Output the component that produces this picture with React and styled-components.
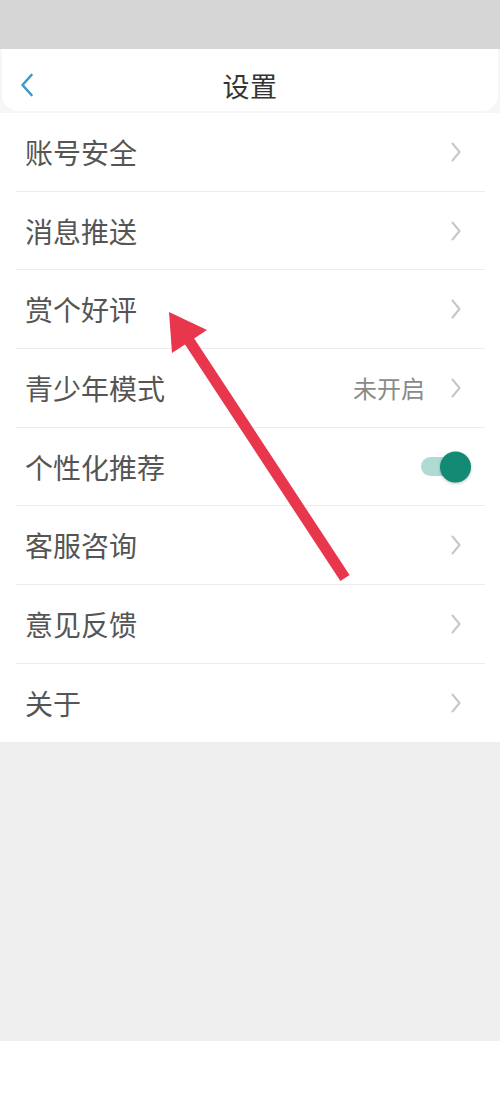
import React from "react";
import styled, { createGlobalStyle } from "styled-components";

const Global = createGlobalStyle`
  html, body { margin: 0; padding: 0; background: #ffffff; }
  body { font-family: "Noto Sans CJK SC", "Noto Sans", sans-serif; }
`;

const Page = styled.div`
  position: relative;
  width: 500px;
  height: 1111px;
  background: #ffffff;
  display: flex;
  flex-direction: column;
  overflow: hidden;
`;

const StatusBar = styled.div`
  height: 49px;
  background: #d6d6d6;
  flex-shrink: 0;
`;

const HeaderWrap = styled.div`
  background: #f6f6f6;
  padding: 0 2px 2px 2px;
  flex-shrink: 0;
`;

const Header = styled.div`
  height: 62px;
  box-sizing: border-box;
  padding-top: 10px;
  background: #ffffff;
  border-radius: 0 0 16px 16px;
  display: flex;
  align-items: center;
  justify-content: center;
  position: relative;
`;

const BackButton = styled.div`
  position: absolute;
  left: 18px;
  top: 74px;
  top: 50%;
  transform: translateY(calc(-50% + 5px));
  width: 18px;
  height: 26px;
  display: flex;
  align-items: center;
`;

const Title = styled.div`
  font-size: 27px;
  color: #333333;
  letter-spacing: 0.5px;
`;

const List = styled.div`
  background: #ffffff;
  flex-shrink: 0;
`;

const Row = styled.div`
  height: 77.7px;
  margin: 0 15px 0 16px;
  padding: 0 24px 0 9px;
  display: flex;
  align-items: center;
  border-bottom: ${(p) => (p.$last ? "none" : "1px solid #ededed")};
`;

const Label = styled.div`
  flex: 1;
  font-size: 28px;
  color: #555555;
`;

const Value = styled.div`
  font-size: 24px;
  color: #8a8a8a;
  margin-right: 26px;
`;

const Track = styled.div`
  position: relative;
  width: 38px;
  height: 19px;
  border-radius: 10px;
  background: #b0dbd5;
  margin-right: 2px;
`;

const Knob = styled.div`
  position: absolute;
  right: -12px;
  top: 50%;
  transform: translateY(-50%);
  width: 31px;
  height: 31px;
  border-radius: 50%;
  background: #128a74;
  box-shadow: 0 1px 3px rgba(0, 0, 0, 0.25);
`;

const Filler = styled.div`
  height: 299px;
  background: #efefef;
  flex-shrink: 0;
`;

const ArrowLayer = styled.svg`
  position: absolute;
  left: 0;
  top: 0;
  pointer-events: none;
`;

const Chevron = () => (
  <svg width="10" height="20" viewBox="0 0 10 20">
    <path d="M1.5 1.5 L8.5 10 L1.5 18.5" fill="none" stroke="#c6c6c6" strokeWidth="2" strokeLinecap="round" strokeLinejoin="round" />
  </svg>
);

const items = [
  { label: "账号安全" },
  { label: "消息推送" },
  { label: "赏个好评" },
  { label: "青少年模式", value: "未开启" },
  { label: "个性化推荐", toggle: true },
  { label: "客服咨询" },
  { label: "意见反馈" },
  { label: "关于" },
];

export default function App() {
  return (
    <>
      <Global />
      <Page>
        <StatusBar />
        <HeaderWrap>
          <Header>
            <BackButton>
              <svg width="14" height="24" viewBox="0 0 14 24">
                <path d="M11.5 2 L2.5 12 L11.5 22" fill="none" stroke="#3a9bc9" strokeWidth="2.6" strokeLinecap="round" strokeLinejoin="round" />
              </svg>
            </BackButton>
            <Title>设置</Title>
          </Header>
        </HeaderWrap>
        <List>
          {items.map((it, i) => (
            <Row key={it.label} $last={i === items.length - 1}>
              <Label>{it.label}</Label>
              {it.value && <Value>{it.value}</Value>}
              {it.toggle ? (
                <Track>
                  <Knob />
                </Track>
              ) : (
                <Chevron />
              )}
            </Row>
          ))}
        </List>
        <Filler />
        <ArrowLayer width="500" height="1111" viewBox="0 0 500 1111">
          <line x1="345" y1="578" x2="186" y2="336" stroke="#e8364c" strokeWidth="11" />
          <polygon points="169,312 207,330 172,353" fill="#e8364c" />
        </ArrowLayer>
      </Page>
    </>
  );
}
